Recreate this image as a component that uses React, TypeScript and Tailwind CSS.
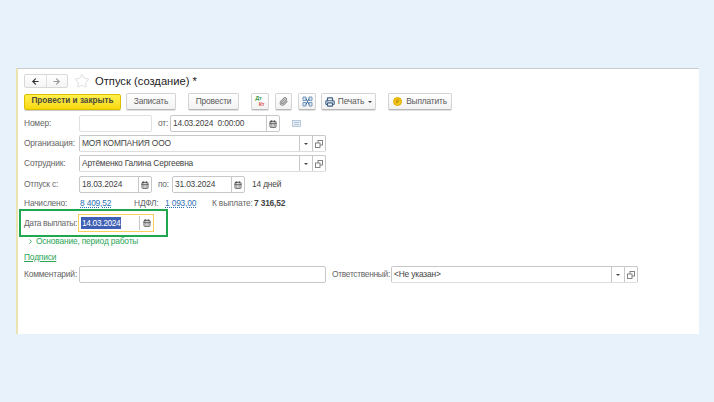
import { ArrowLeft, ArrowRight, CalendarDays, ChevronRight, Paperclip, Printer, Star } from "lucide-react";
import type { ReactNode } from "react";

const ToolButton = ({ className, children }: { className: string; children: ReactNode }) => (
    <div className={`h-[17px] flex items-center justify-center rounded-[2px] border border-[#d4d4d4] border-b-[#b8b8b8] bg-gradient-to-b from-white to-[#f2f2f2] text-[#5a5a5a] shadow-[0_1px_0_#e0e0e0] whitespace-nowrap ${className}`}>
        {children}
    </div>
);

const OpenIcon = () => (
    <svg width="8" height="8" viewBox="0 0 8 8" fill="none" stroke="#777" strokeWidth="0.9">
        <rect x="3" y="0.5" width="4.5" height="4.5" />
        <rect x="0.5" y="3" width="4.5" height="4.5" fill="white" />
    </svg>
);

const Calendar = () => <CalendarDays className="w-[8px] h-[8px] text-[#444]" strokeWidth={2.6} />;

const DateField = ({ value, className }: { value: string; className: string }) => (
    <div className={`h-[17px] flex items-center rounded-[2px] border border-[#c8c8c8] bg-white ${className}`}>
        <span className="flex-1 pl-[2px] text-[#444] whitespace-pre">{value}</span>
        <div className="w-[13px] h-full flex items-center justify-center border-l border-[#c8c8c8]">
            <Calendar />
        </div>
    </div>
);

const SelectField = ({ value, className }: { value: string; className: string }) => (
    <div className={`h-[17px] flex items-center rounded-[2px] border border-[#c8c8c8] border-b-[#ddd] bg-white ${className}`}>
        <span className="flex-1 pl-[2px] text-[#444]">{value}</span>
        <div className="w-[13px] h-full flex items-center justify-center border-l border-[#c8c8c8]">
            <div className="w-0 h-0 border-x-[2px] border-t-[2px] border-x-transparent border-t-[#444]" />
        </div>
        <div className="w-[13px] h-full flex items-center justify-center border-l border-[#c8c8c8]">
            <OpenIcon />
        </div>
    </div>
);

const Row = ({ label, height, className, children }: { label?: string; height: string; className?: string; children?: ReactNode }) => (
    <div className={`flex items-center whitespace-nowrap ${height} ${className ?? ""}`}>
        {label && <span className="w-[55px] shrink-0 text-[#666]">{label}</span>}
        {children}
    </div>
);

export default function App() {
    return (
        <div className="relative w-[714px] h-[402px] overflow-hidden bg-[#e8f2fb] pt-[68px] pl-[16px] font-['Liberation_Sans',Arial,sans-serif] text-[8.4px] tracking-[-0.17px] leading-none">
            <div className="w-[683px] h-[266px] bg-white border-t border-t-[#c9ccce] border-l-2 border-l-[#ebe3b0] pl-[6px] flex flex-col">
                {/* Header */}
                <div className="flex items-center h-[24px]">
                    <div className="flex w-[44px] h-[14px] rounded-[2px] border border-[#d8d8d8] bg-gradient-to-b from-white to-[#f4f4f4]">
                        <div className="flex-1 flex items-center justify-center border-r border-[#e0e0e0]">
                            <ArrowLeft className="w-[9px] h-[9px] text-[#333]" strokeWidth={3} />
                        </div>
                        <div className="flex-1 flex items-center justify-center">
                            <ArrowRight className="w-[9px] h-[9px] text-[#999]" strokeWidth={3} />
                        </div>
                    </div>
                    <Star className="w-[16px] h-[16px] ml-[6px] text-[#d6d6d6]" strokeWidth={1.2} />
                    <span className="ml-[5px] pt-[1px] text-[11.2px] tracking-normal text-[#222] whitespace-nowrap">Отпуск (создание) *</span>
                </div>

                {/* Toolbar */}
                <div className="flex items-center h-[17px]">
                    <div className="w-[97px] h-[16px] flex items-center justify-center rounded-[2px] border border-[#dcc000] bg-gradient-to-b from-[#fff04a] to-[#f8d800] text-[#4a4a3a] text-[8.2px] tracking-normal font-bold shadow-[0_1px_0_#ccc] whitespace-nowrap">
                        Провести и закрыть
                    </div>
                    <ToolButton className="w-[50px] ml-[5px]">Записать</ToolButton>
                    <ToolButton className="w-[51px] ml-[12px]">Провести</ToolButton>
                    <ToolButton className="w-[18px] ml-[12px]">
                        <span className="flex flex-col text-[5.5px] font-bold leading-[5.5px] items-center">
                            <span className="text-[#3a9a4a] -ml-[3px]">Дт</span>
                            <span className="text-[#d9534f] ml-[3px]">Кт</span>
                        </span>
                    </ToolButton>
                    <ToolButton className="w-[17px] ml-[6px]">
                        <Paperclip className="w-[9px] h-[9px] text-[#888]" strokeWidth={2.8} />
                    </ToolButton>
                    <ToolButton className="w-[18px] ml-[6px]">
                        <svg width="11" height="11" viewBox="0 0 11 11" fill="none">
                            <path d="M1 1h3v3.5H1zM7 1h3v3.5H7zM1 6.5h3V10H1zM7 6.5h3V10H7z" fill="#dce9f5" stroke="#5b84ad" strokeWidth="0.8" />
                            <path d="M4 2.5l3 6M7 2.5l-3 6" stroke="#3d6a96" strokeWidth="1" />
                        </svg>
                    </ToolButton>
                    <ToolButton className="w-[55px] ml-[5px] gap-[3px]">
                        <Printer className="w-[10px] h-[10px] text-[#3f6187]" strokeWidth={2.8} />
                        <span>Печать</span>
                        <div className="ml-[1px] w-0 h-0 border-x-[2px] border-t-[2px] border-x-transparent border-t-[#444]" />
                    </ToolButton>
                    <ToolButton className="w-[64px] ml-[12px] gap-[4px]">
                        <div className="w-[9px] h-[9px] rounded-full bg-[#f2c418] border border-[#e0ae00] flex items-center justify-center text-[5px] text-[#8a6400]">₽</div>
                        <span>Выплатить</span>
                    </ToolButton>
                </div>

                {/* Form */}
                <Row label="Номер:" height="h-[17px]" className="mt-[5px]">
                    <div className="w-[73px] h-[17px] rounded-[2px] border border-[#e0e0e0] bg-white" />
                    <span className="ml-[6px] w-[12px] text-[#666]">от:</span>
                    <DateField value="14.03.2024  0:00:00" className="w-[110px]" />
                    <svg className="ml-[12px]" width="9" height="7" viewBox="0 0 9 7" fill="#e4edf5" stroke="#9db5cb" strokeWidth="0.7">
                        <rect x="0.5" y="0.5" width="8" height="6" />
                        <path d="M2 2.5h5M2 4.5h5" fill="none" />
                    </svg>
                </Row>
                <Row label="Организация:" height="h-[17px]" className="mt-[3px]">
                    <SelectField value="МОЯ КОМПАНИЯ ООО" className="w-[247px]" />
                </Row>
                <Row label="Сотрудник:" height="h-[17px]" className="mt-[3px]">
                    <SelectField value="Артёменко Галина Сергеевна" className="w-[247px]" />
                </Row>
                <Row label="Отпуск с:" height="h-[17px]" className="mt-[4px]">
                    <DateField value="18.03.2024" className="w-[73px]" />
                    <span className="ml-[6px] w-[14px] text-[#666]">по:</span>
                    <DateField value="31.03.2024" className="w-[73px]" />
                    <span className="ml-[7px] text-[#444]">14 дней</span>
                </Row>
                <Row label="Начислено:" height="h-[13px]" className="mt-[4px]">
                    <span className="w-[55px] pl-[1px] text-[#2f6fb5] underline decoration-dotted">8 409,52</span>
                    <span className="w-[31px] text-[#666]">НДФЛ:</span>
                    <span className="w-[47px] text-[#2f6fb5] underline decoration-dotted">1 093,00</span>
                    <span className="w-[42px] text-[#666]">К выплате:</span>
                    <span className="font-bold text-[#444]">7 316,52</span>
                </Row>
                <Row label="Дата выплаты:" height="h-[18px]" className="mt-[4px] tracking-[-0.35px]">
                    <div className="-ml-[1px] w-[76px] h-[18px] flex items-center border-[1.5px] border-[#f7cf5a] bg-white">
                        <div className="flex-1 pl-[2px]">
                            <span className="bg-[#3f5fb5] text-white px-[1px] py-[1px]">14.03.2024</span>
                        </div>
                        <div className="w-[14px] h-[14px] flex items-center justify-center border-l border-[#c8c8c8]">
                            <Calendar />
                        </div>
                    </div>
                </Row>
                <div className="flex items-center h-[12px] mt-[3px] pl-[3px] text-[#2ea65a] whitespace-nowrap">
                    <ChevronRight className="w-[7px] h-[7px]" strokeWidth={3} />
                    <span className="ml-[2px]">Основание, период работы</span>
                </div>
                <div className="h-[12px] mt-[4px] flex items-center text-[#2ea65a]">
                    <span className="underline">Подписи</span>
                </div>
                <Row label="Комментарий:" height="h-[17px]" className="mt-[3px]">
                    <div className="w-[247px] h-[17px] rounded-[2px] border border-[#c8c8c8] bg-white" />
                    <span className="ml-[6px] w-[59px] text-[#666] tracking-[-0.3px]">Ответственный:</span>
                    <SelectField value="<Не указан>" className="w-[247px]" />
                </Row>
            </div>

            {/* Green highlight */}
            <div className="absolute left-[19px] top-[209px] w-[149px] h-[28px] border-2 border-[#1fa84f]" />
        </div>
    );
}
